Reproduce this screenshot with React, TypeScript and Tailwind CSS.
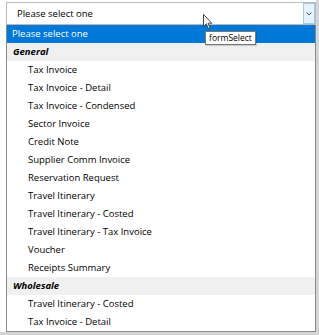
import React from "react";

const groups = [
  {
    label: "General",
    items: [
      "Tax Invoice",
      "Tax Invoice - Detail",
      "Tax Invoice - Condensed",
      "Sector Invoice",
      "Credit Note",
      "Supplier Comm Invoice",
      "Reservation Request",
      "Travel Itinerary",
      "Travel Itinerary - Costed",
      "Travel Itinerary - Tax Invoice",
      "Voucher",
      "Receipts Summary",
    ],
  },
  {
    label: "Wholesale",
    items: ["Travel Itinerary - Costed", "Tax Invoice - Detail"],
  },
];

const Cursor = () => (
  <svg width="11" height="16" viewBox="0 0 11 16" className="absolute left-[203px] top-[14px]">
    <path
      d="M0.5 0.5 L0.5 12.5 L3.3 9.8 L5.3 14.5 L7 13.8 L5 9.2 L8.8 9.2 Z"
      fill="#fff"
      stroke="#444"
      strokeWidth="1"
      strokeLinejoin="round"
    />
  </svg>
);

export default function App() {
  return (
    <div className="relative w-[319px] h-[335px] overflow-hidden border-r-[3px] border-b-[3px] border-[#d4d4d4] bg-white font-['Open_Sans',sans-serif] text-[9.5px] text-black">
      <div className="pl-[6px] pt-[2px]">
        <div className="flex h-[23px] w-[310px] items-center border border-[#b9b9b9] bg-white">
          <span className="flex-1 pl-[10px] pt-px">Please select one</span>
          <div className="flex h-full w-[12px] items-center justify-center border border-[#9ccbf2] bg-[#e5f1fb]">
            <svg width="6" height="4" viewBox="0 0 6 4">
              <path d="M0.5 0.5 L3 3 L5.5 0.5" fill="none" stroke="#555" strokeWidth="1" />
            </svg>
          </div>
        </div>
        <div className="w-[310px] border border-t-0 border-[#8a8a8a] bg-white shadow-[2px_2px_2px_rgba(0,0,0,0.2)]">
          <div className="flex h-[18px] items-center bg-[#0078d7] pl-[5px] pt-px text-white">
            Please select one
          </div>
          {groups.map((g) => (
            <div key={g.label}>
              <div className="flex h-[18px] items-center bg-[#f0f0f0] pl-[6px] pt-px font-bold italic">
                {g.label}
              </div>
              {g.items.map((item, i) => (
                <div key={i} className="flex h-[18px] items-center pl-[21px] pt-px">
                  {item}
                </div>
              ))}
            </div>
          ))}
        </div>
      </div>
      <div className="absolute -right-[3px] top-[253px] h-[20px] w-[2px] bg-[#3aa55a]" />
      <Cursor />
      <div className="absolute left-[205px] top-[31px] flex h-[14px] w-[51px] items-center justify-center border border-[#767676] bg-white text-[8.5px] shadow-[1px_1px_1px_rgba(0,0,0,0.15)]">
        formSelect
      </div>
    </div>
  );
}
